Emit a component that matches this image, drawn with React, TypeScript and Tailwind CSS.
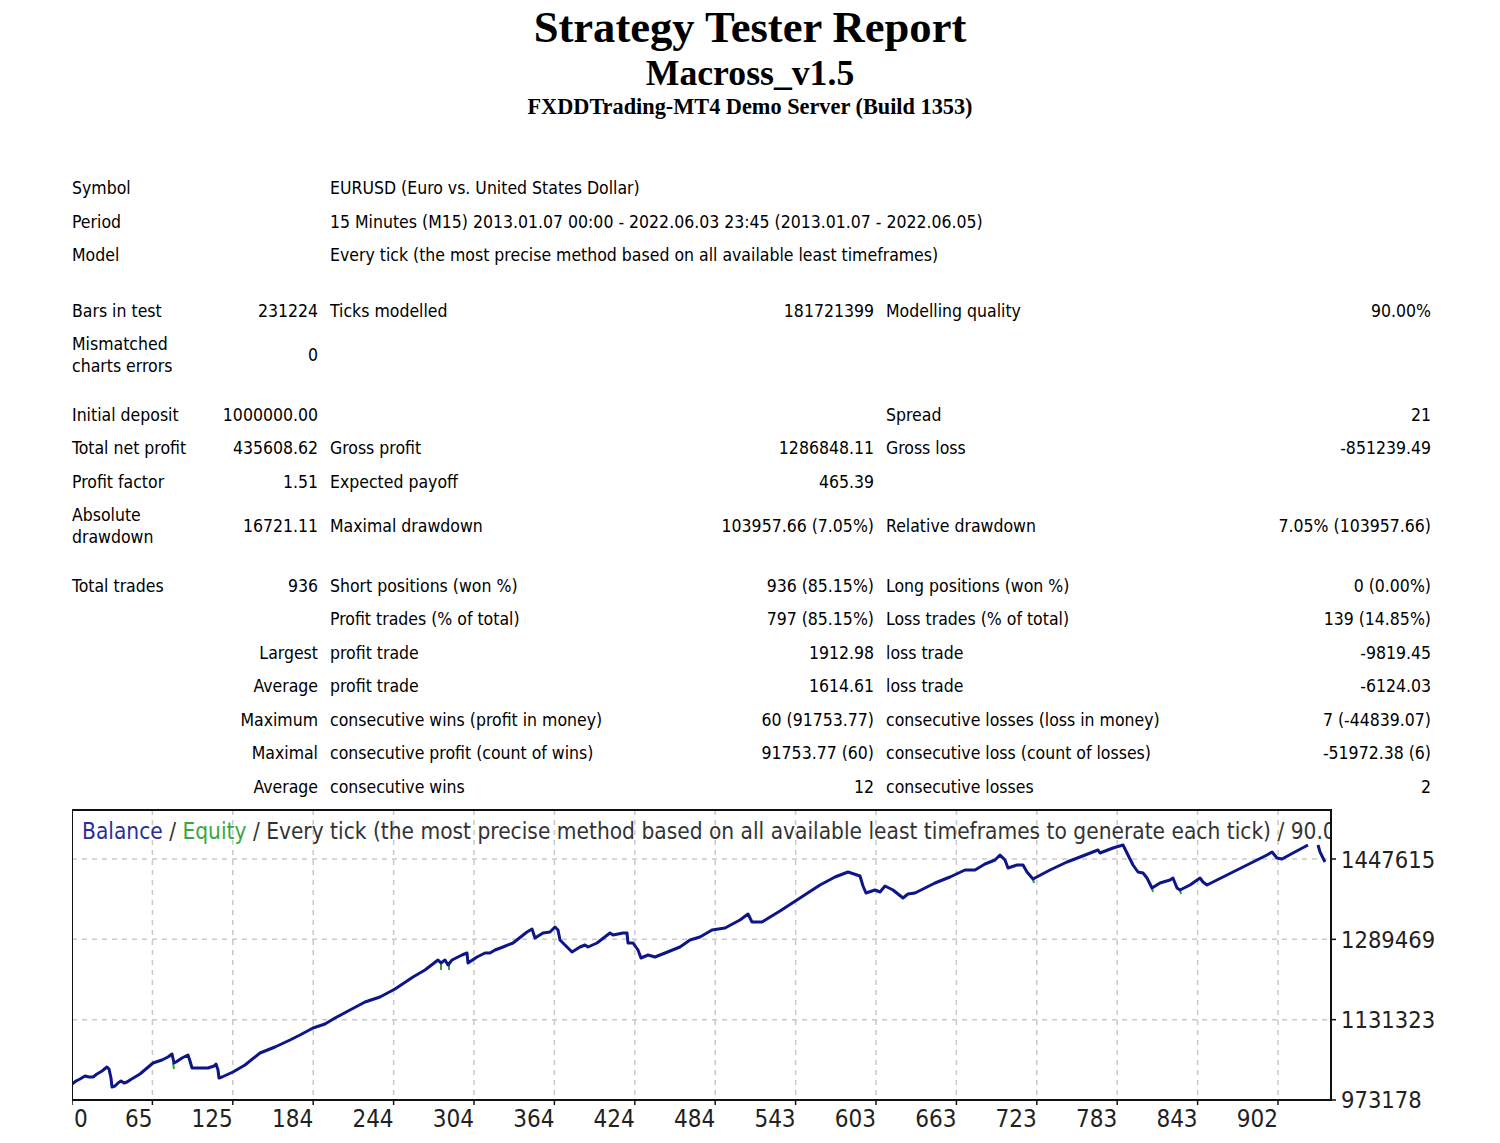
const rows: (string[] | number)[] = [
  ["Symbol", "EURUSD (Euro vs. United States Dollar)"],
  ["Period", "15 Minutes (M15) 2013.01.07 00:00 - 2022.06.03 23:45 (2013.01.07 - 2022.06.05)"],
  ["Model", "Every tick (the most precise method based on all available least timeframes)"],
  22,
  ["Bars in test", "231224", "Ticks modelled", "181721399", "Modelling quality", "90.00%"],
  ["Mismatched charts errors", "0", "", "", "", ""],
  15.5,
  ["Initial deposit", "1000000.00", "", "", "Spread", "21"],
  ["Total net profit", "435608.62", "Gross profit", "1286848.11", "Gross loss", "-851239.49"],
  ["Profit factor", "1.51", "Expected payoff", "465.39", "", ""],
  ["Absolute drawdown", "16721.11", "Maximal drawdown", "103957.66 (7.05%)", "Relative drawdown", "7.05% (103957.66)"],
  15.5,
  ["Total trades", "936", "Short positions (won %)", "936 (85.15%)", "Long positions (won %)", "0 (0.00%)"],
  ["", "", "Profit trades (% of total)", "797 (85.15%)", "Loss trades (% of total)", "139 (14.85%)"],
  ["", "Largest", "profit trade", "1912.98", "loss trade", "-9819.45"],
  ["", "Average", "profit trade", "1614.61", "loss trade", "-6124.03"],
  ["", "Maximum", "consecutive wins (profit in money)", "60 (91753.77)", "consecutive losses (loss in money)", "7 (-44839.07)"],
  ["", "Maximal", "consecutive profit (count of wins)", "91753.77 (60)", "consecutive loss (count of losses)", "-51972.38 (6)"],
  ["", "Average", "consecutive wins", "12", "consecutive losses", "2"],
];

const tall = ["Mismatched charts errors", "Absolute drawdown"];

const balance =
  "72,1084 76,1081 80,1079 85,1076 89,1077 93,1077 97,1074 102,1071 107,1067 109,1069 111,1078 112,1087 115,1086 118,1083 121,1081 124,1083 127,1082 130,1080 140,1074 153,1063 162,1060 168,1057 172,1054 174,1063 176,1062 182,1058 188,1055 190,1061 192,1068 200,1068 208,1068 214,1066 216,1064 218,1070 219,1078 222,1077 233,1072 245,1065 260,1053 275,1047 290,1040 300,1035 313,1028 325,1024 335,1018 350,1010 365,1002 380,997 395,989 413,977 425,970 438,960 441,963 445,960 448,965 452,960 462,955 467,953 468,963 477,957 485,953 490,953 495,950 503,947 513,943 527,932 532,929 535,938 543,933 550,932 555,927 558,930 560,940 567,947 572,952 580,947 585,945 588,947 597,943 610,933 613,935 623,933 627,933 628,943 633,943 638,950 641,958 648,955 655,957 665,953 680,947 690,940 700,937 712,930 725,928 740,920 748,914 752,922 762,922 780,911 800,898 820,885 835,877 848,872 860,876 863,886 866,893 875,890 880,892 885,886 893,890 898,894 903,898 908,894 915,893 925,888 935,883 950,877 965,870 975,870 985,864 995,860 1000,855 1005,860 1008,868 1017,865 1023,865 1027,872 1033,879 1050,870 1067,862 1080,857 1098,850 1100,853 1113,848 1123,845 1128,855 1133,865 1138,872 1143,873 1147,878 1152,888 1160,883 1170,880 1173,878 1177,888 1180,890 1190,885 1200,878 1203,882 1207,885 1227,875 1253,862 1267,855 1272,852 1277,858 1282,859 1293,853 1308,845";

const equitySpikes = [
  [173, 1063, 174, 1069],
  [441, 963, 441, 970],
  [449, 965, 449, 970],
  [1033, 879, 1034, 883],
  [1152, 888, 1153, 892],
  [1180, 890, 1181, 894],
];

const xLabels = ["0", "65", "125", "184", "244", "304", "364", "424", "484", "543", "603", "663", "723", "783", "843", "902"];
const yLabels = ["1447615", "1289469", "1131323", "973178"];

function Chart() {
  const top = 810;
  const bottom = 1100;
  const left = 72;
  const right = 1331;
  const xs = xLabels.map((_, i) => left + 80.4 * i);
  const ys = yLabels.map((_, i) => 859 + 80.33 * i);
  return (
    <svg
      width={1420}
      height={337}
      viewBox="72 806 1420 337"
      className="block [font-family:'DejaVu_Sans_Condensed','DejaVu_Sans',sans-serif]"
    >
      <defs>
        <clipPath id="box">
          <rect x={left} y={top} width={right - left} height={bottom - top} />
        </clipPath>
      </defs>
      {xs.slice(1).map((x) => (
        <line key={x} x1={x} y1={top} x2={x} y2={bottom} stroke="#c9c9c9" strokeWidth={1.5} strokeDasharray="5 5" />
      ))}
      {ys.slice(0, 3).map((y) => (
        <line key={y} x1={left} y1={y} x2={right} y2={y} stroke="#c9c9c9" strokeWidth={1.5} strokeDasharray="5 5" />
      ))}
      <g clipPath="url(#box)">
        <text x={82} y={839} fontSize={22.5} fill="#333">
          <tspan fill="#2b2f98">Balance</tspan> / <tspan fill="#39a83c">Equity</tspan> / Every tick (the most precise method based on all available least timeframes to generate each tick) / 90.00%
        </text>
      </g>
      {equitySpikes.map(([a, b, c, d], i) => (
        <line key={i} x1={a} y1={b} x2={c} y2={d} stroke="#2fa335" strokeWidth={2} />
      ))}
      <polyline points={balance} fill="none" stroke="#0d1688" strokeWidth={3} strokeLinejoin="round" />
      <polyline points="1318,845 1320,852 1325,862" fill="none" stroke="#0d1688" strokeWidth={3} />
      <polyline
        points={`${left},${top} ${right},${top} ${right},${bottom} ${left},${bottom} ${left},${top}`}
        fill="none"
        stroke="#111"
        strokeWidth={2}
      />
      {xs.map((x, i) => (
        <g key={i}>
          <line x1={x} y1={bottom} x2={x} y2={bottom + 5} stroke="#111" strokeWidth={1.5} />
          <text x={i === 0 ? 74 : x} y={1127} fontSize={24} fill="#222" textAnchor={i === 0 ? "start" : "end"}>
            {xLabels[i]}
          </text>
        </g>
      ))}
      {ys.map((y, i) => (
        <g key={i}>
          <line x1={right} y1={y} x2={right + 5} y2={y} stroke="#111" strokeWidth={1.5} />
          <text x={1341} y={y + 8.5} fontSize={23.5} fill="#222">
            {yLabels[i]}
          </text>
        </g>
      ))}
    </svg>
  );
}

export default function App() {
  return (
    <div className="w-[1500px] h-[1143px] overflow-hidden bg-white text-black">
      <div className="flex flex-col items-center [font-family:'Liberation_Serif',serif] font-bold">
        <div className="text-[44.6px] leading-[50px] mt-[2px]">Strategy Tester Report</div>
        <div className="text-[35.7px] leading-[40px] mt-[1px]">Macross_v1.5</div>
        <div className="text-[22.3px] leading-[28px]">FXDDTrading-MT4 Demo Server (Build 1353)</div>
      </div>
      <div className="pl-[72px] pt-[50.5px] [font-family:'DejaVu_Sans_Condensed','DejaVu_Sans',sans-serif] text-[17.5px] leading-[22px]">
        {rows.map((r, i) => {
          if (typeof r === "number") return <div key={i} style={{ height: r }} />;
          const h = tall.includes(r[0]) ? "h-[55px]" : "h-[33.5px]";
          if (r.length === 2)
            return (
              <div key={i} className={`grid grid-cols-[252px_1113px] items-center ${h}`}>
                <div>{r[0]}</div>
                <div className="pl-[6px]">{r[1]}</div>
              </div>
            );
          return (
            <div key={i} className={`grid grid-cols-[140px_112px_366px_190px_370px_187px] items-center ${h}`}>
              <div>{r[0]}</div>
              <div className="text-right pr-[6px] whitespace-nowrap">{r[1]}</div>
              <div className="pl-[6px] whitespace-nowrap">{r[2]}</div>
              <div className="text-right pr-[6px] whitespace-nowrap">{r[3]}</div>
              <div className="pl-[6px] whitespace-nowrap">{r[4]}</div>
              <div className="text-right pr-[6px] whitespace-nowrap">{r[5]}</div>
            </div>
          );
        })}
        <div className="h-[2px]" />
      </div>
      <div className="pl-[72px]">
        <Chart />
      </div>
    </div>
  );
}
